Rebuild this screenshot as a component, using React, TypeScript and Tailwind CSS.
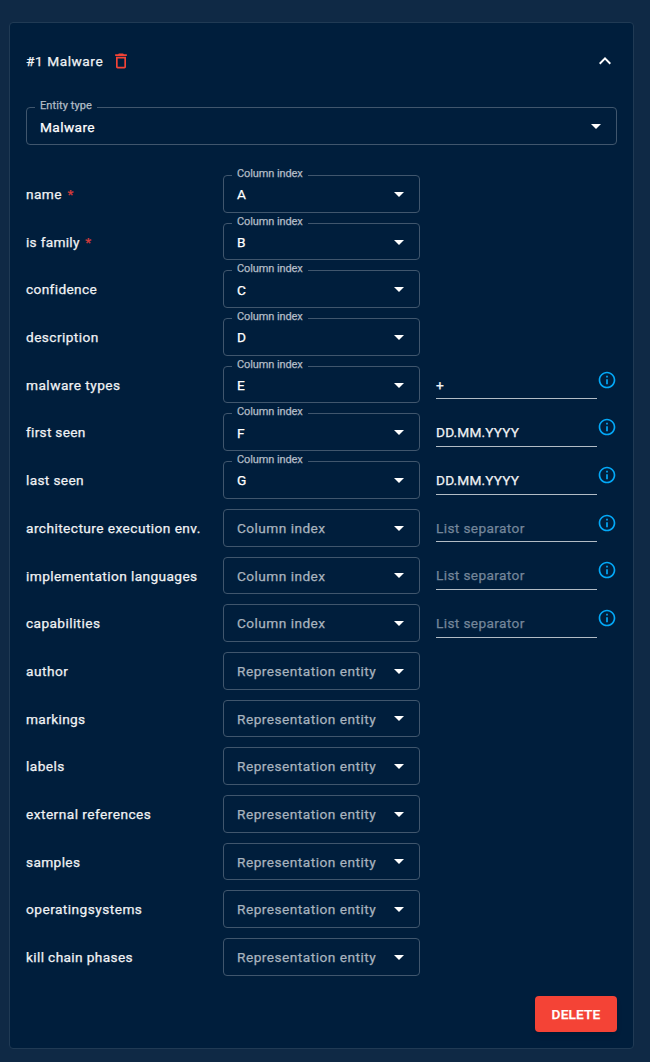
type Kind = 'index' | 'entity';

interface Row {
  label: string;
  tracking: string;
  kind: Kind;
  value?: string;
  required?: boolean;
  extra?: string;
  placeholder?: boolean;
}

const rows: Row[] = [
  { label: 'name', tracking: 'tracking-[0.4px]', kind: 'index', value: 'A', required: true },
  { label: 'is family', tracking: 'tracking-[0.28px]', kind: 'index', value: 'B', required: true },
  { label: 'confidence', tracking: 'tracking-[0.36px]', kind: 'index', value: 'C' },
  { label: 'description', tracking: 'tracking-[0.42px]', kind: 'index', value: 'D' },
  { label: 'malware types', tracking: 'tracking-[0.46px]', kind: 'index', value: 'E', extra: '+' },
  { label: 'first seen', tracking: 'tracking-[0.28px]', kind: 'index', value: 'F', extra: 'DD.MM.YYYY' },
  { label: 'last seen', tracking: 'tracking-[0.34px]', kind: 'index', value: 'G', extra: 'DD.MM.YYYY' },
  { label: 'architecture execution env.', tracking: 'tracking-[0.44px]', kind: 'index', extra: 'List separator', placeholder: true },
  { label: 'implementation languages', tracking: 'tracking-[0.4px]', kind: 'index', extra: 'List separator', placeholder: true },
  { label: 'capabilities', tracking: 'tracking-[0.4px]', kind: 'index', extra: 'List separator', placeholder: true },
  { label: 'author', tracking: 'tracking-[0.5px]', kind: 'entity' },
  { label: 'markings', tracking: 'tracking-[0.36px]', kind: 'entity' },
  { label: 'labels', tracking: 'tracking-[0.46px]', kind: 'entity' },
  { label: 'external references', tracking: 'tracking-[0.46px]', kind: 'entity' },
  { label: 'samples', tracking: 'tracking-[0.36px]', kind: 'entity' },
  { label: 'operatingsystems', tracking: 'tracking-[0.46px]', kind: 'entity' },
  { label: 'kill chain phases', tracking: 'tracking-[0.36px]', kind: 'entity' },
];

function Caret() {
  return (
    <svg viewBox="0 0 24 24" className="size-6 shrink-0 fill-white">
      <path d="M7 10l5 5 5-5z" />
    </svg>
  );
}

function InfoIcon() {
  return (
    <svg viewBox="0 0 24 24" className="mt-[3.8px] size-5 shrink-0 fill-[#03a9f8]">
      <path d="M11 7h2v2h-2zm0 4h2v6h-2zm1-9C6.480 2 2 6.480 2 12s4.480 10 10 10 10-4.480 10-10S17.520 2 12 2zm0 18c-4.410 0-8-3.590-8-8s3.590-8 8-8 8 3.590 8 8-3.590 8-8 8z" />
    </svg>
  );
}

function FloatingLabel({ text, tracking }: { text: string; tracking: string }) {
  return (
    <span className={`absolute -top-[9px] left-[8px] bg-[#001e3c] pr-[5px] pl-[5px] text-[11px] leading-[13px] whitespace-nowrap text-[#b1bbc5] ${tracking}`}>
      {text}
    </span>
  );
}

function Select({ row }: { row: Row }) {
  return (
    <div className="relative flex h-full w-[197px] items-center justify-between rounded-[4px] border border-[#40566d] pr-[8px] pl-[13px]">
      {row.value ? (
        <>
          <FloatingLabel text="Column index" tracking="tracking-[-0.1px]" />
          <span className="pt-[0.6px] text-white">{row.value}</span>
        </>
      ) : row.kind === 'index' ? (
        <span className="pt-[0.6px] tracking-[0.44px] text-[#a8b3be]">Column index</span>
      ) : (
        <span className="pt-[0.6px] tracking-[0.48px] text-[#a8b3be]">Representation entity</span>
      )}
      <Caret />
    </div>
  );
}

function FieldRow({ row }: { row: Row }) {
  return (
    <div className="flex h-[37.6875px]">
      <div className="flex w-[197px] items-center pt-[0.4px] whitespace-nowrap">
        <span className={row.tracking}>{row.label}</span>
        {row.required && <span className="ml-[5.5px] text-[#d63c3b]">*</span>}
      </div>
      <Select row={row} />
      {row.extra && (
        <div className="ml-4 flex">
          <div className="mb-[4.2px] flex w-[161px] items-end border-b border-[#b2bcc5] pb-[3.7px]">
            <span className={row.placeholder ? 'tracking-[0.36px] text-[#74869a]' : 'tracking-[0.15px]'}>{row.extra}</span>
          </div>
          <InfoIcon />
        </div>
      )}
    </div>
  );
}

export default function App() {
  return (
    <div className="h-[1062px] w-[650px] bg-[#0f2945] pt-[22px] pl-[9px] font-['Roboto','Liberation_Sans',sans-serif] text-[13.7px] leading-5 font-normal text-[#f0f2f4] [-webkit-text-stroke:0.25px_currentColor]">
      <section className="flex h-[1027px] w-[625px] flex-col rounded-[4px] border border-[#203a54] bg-[#001e3c] px-4">
        <header className="mt-[26px] flex h-6 items-center">
          <h2 className="w-[77px] tracking-[0.55px] whitespace-nowrap">#1 Malware</h2>
          <svg viewBox="0 0 24 24" className="ml-2 size-5 fill-[#f44336]">
            <path d="M6 19c0 1.100.900 2 2 2h8c1.100 0 2-.900 2-2V7H6v12zM8 9h8v10H8V9zm7.500-5l-1-1h-5l-1 1H5v2h14V4z" />
          </svg>
          <svg viewBox="0 0 24 24" className="mr-0 ml-auto size-6 fill-white">
            <path d="M12 8l-6 6 1.410 1.410L12 10.830l4.590 4.580L18 14z" />
          </svg>
        </header>
        <div className="relative mt-[34px] flex h-[38px] w-[591px] shrink-0 items-center justify-between rounded-[4px] border border-[#40566d] pr-[8px] pl-[13px] text-white">
          <FloatingLabel text="Entity type" tracking="tracking-[0.1px]" />
          <span className="pt-[1.5px] tracking-[0.4px]">Malware</span>
          <Caret />
        </div>
        <div className="mt-[30px] flex flex-col gap-[10px]">
          {rows.map((row) => (
            <FieldRow key={row.label} row={row} />
          ))}
        </div>
        <button className="mt-5 h-9 w-[82px] shrink-0 self-end rounded-[4px] bg-[#f44336] font-medium tracking-[0.15px] text-white shadow-md">DELETE</button>
      </section>
    </div>
  );
}
